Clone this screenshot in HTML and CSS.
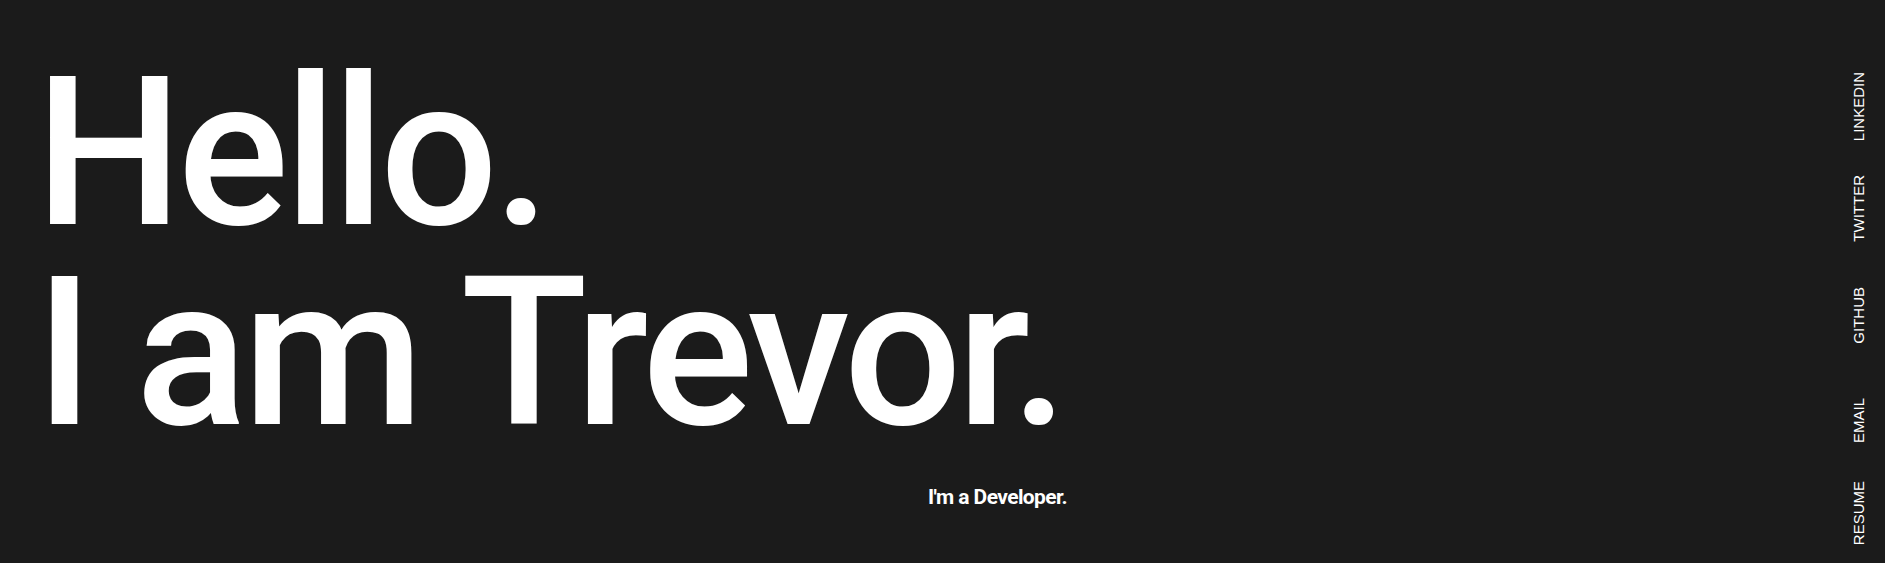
FILE: index.html
```html
<!DOCTYPE html>
<html lang="en">
<head>
<meta charset="utf-8">
<title>Trevor</title>
<link rel="stylesheet" href="styles.css">
</head>
<body>
<div class="page">
  <main class="hero">
    <h1 class="title"><span class="line">Hello.</span><span class="line">I am Trevor.</span></h1>
    <p class="tagline">I'm a Developer.</p>
  </main>
  <nav class="social">
    <a class="link link-linkedin" href="#">LINKEDIN</a>
    <a class="link link-twitter" href="#">TWITTER</a>
    <a class="link link-github" href="#">GITHUB</a>
    <a class="link link-email" href="#">EMAIL</a>
    <a class="link link-resume" href="#">RESUME</a>
  </nav>
</div>
</body>
</html>
```
FILE: styles.css
```css
html, body {
  margin: 0;
  padding: 0;
  background: #1b1b1b;
  height: 100%;
}
.page {
  display: flex;
  justify-content: space-between;
  height: 563px;
  overflow: hidden;
}
.hero {
  padding: 53px 0 0 35px;
}
.title {
  margin: 0;
  font-family: Roboto, "Liberation Sans", sans-serif;
  font-weight: 500;
  font-size: 208px;
  line-height: 200px;
  color: #ffffff;
  letter-spacing: -5px;
}
.line {
  display: block;
  white-space: nowrap;
}
.tagline {
  margin: 32px 0 0 893px;
  font-family: Roboto, "Liberation Sans", sans-serif;
  font-weight: 700;
  font-size: 21px;
  color: #ffffff;
  letter-spacing: -0.6px;
}
.social {
  display: flex;
  flex-direction: column;
  align-items: center;
  padding: 72px 18px 0 0;
  width: 16px;
}
.link {
  writing-mode: vertical-rl;
  transform: rotate(180deg);
  font-family: "Liberation Sans", Arial, sans-serif;
  font-size: 15px;
  line-height: 16px;
  color: #ffffff;
  text-decoration: none;
}
.link-twitter { margin-top: 34px; }
.link-github { margin-top: 45px; }
.link-email { margin-top: 54px; }
.link-resume { margin-top: 38px; }
```
